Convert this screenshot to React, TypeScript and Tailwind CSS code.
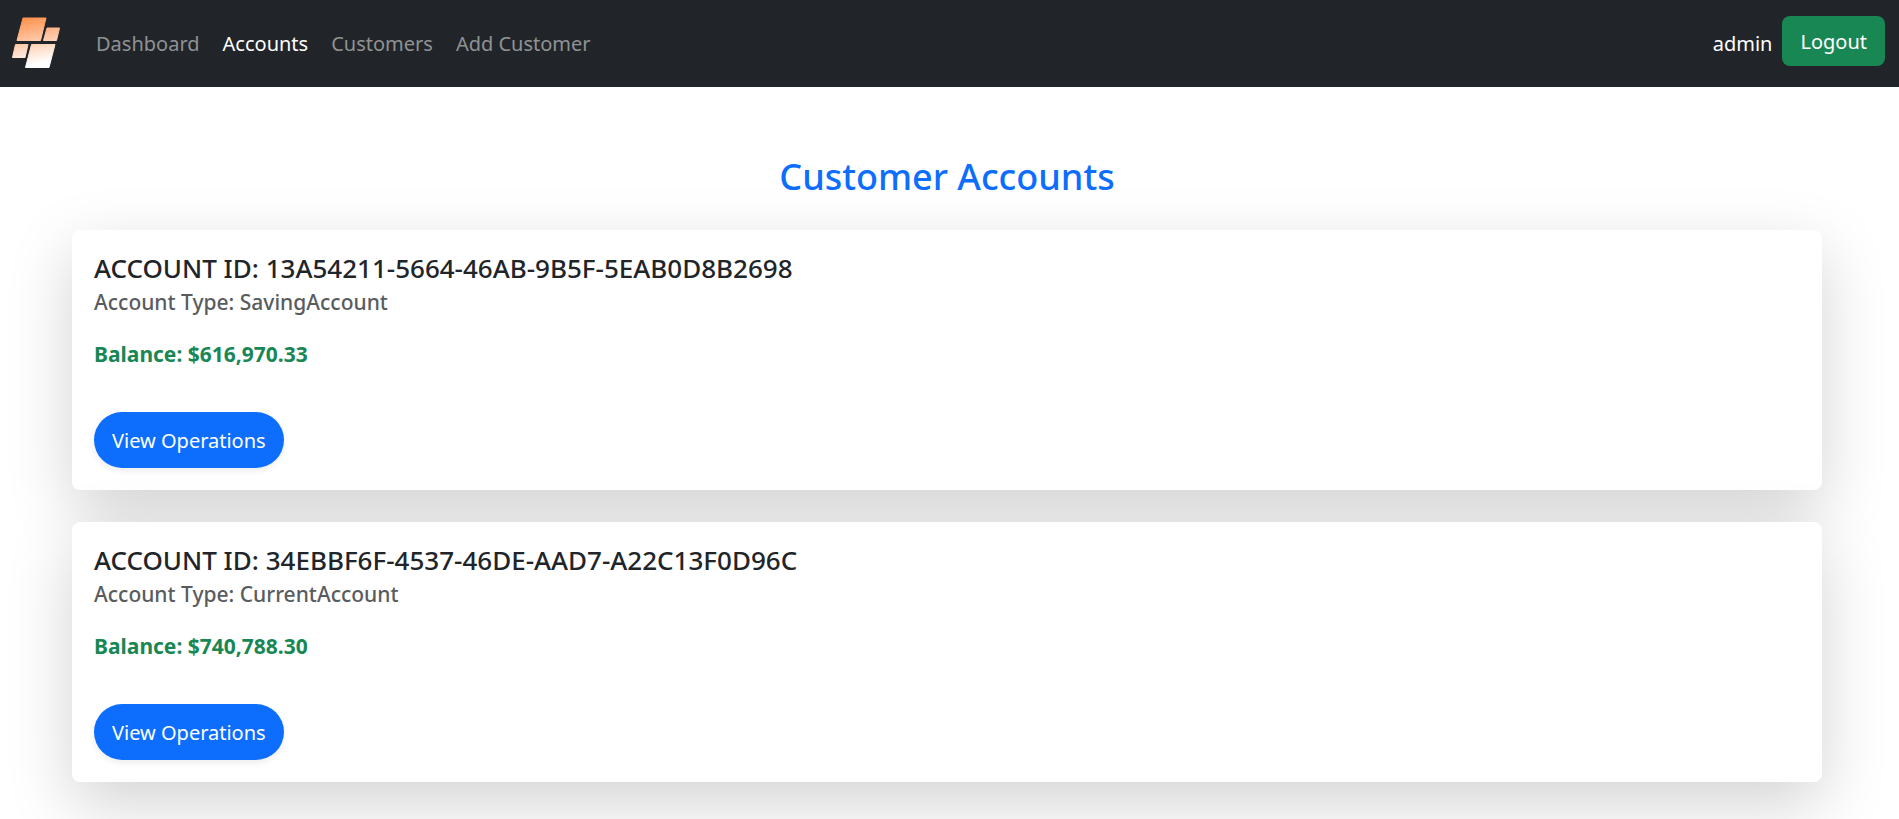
type Account = { id: string; type: string; balance: string };

const accounts: Account[] = [
  { id: '13A54211-5664-46AB-9B5F-5EAB0D8B2698', type: 'SavingAccount', balance: '$616,970.33' },
  { id: '34EBBF6F-4537-46DE-AAD7-A22C13F0D96C', type: 'CurrentAccount', balance: '$740,788.30' },
];

const links = [
  { label: 'Dashboard', active: false },
  { label: 'Accounts', active: true },
  { label: 'Customers', active: false },
  { label: 'Add Customer', active: false },
];

function Logo() {
  return (
    <svg width="52" height="52" viewBox="0 0 52 52" aria-hidden="true">
      <defs>
        <linearGradient id="logo-fill" gradientUnits="userSpaceOnUse" x1="20" y1="0" x2="30" y2="46">
          <stop offset="0" stopColor="#ff914d" />
          <stop offset="1" stopColor="#ffffff" />
        </linearGradient>
      </defs>
      <g fill="url(#logo-fill)" stroke="url(#logo-fill)" strokeWidth="1" strokeLinejoin="round">
        <path d="M13 1H36L30.500 23.500H7Z" />
        <path d="M37 11H49.500L46.500 23.500H33.500Z" />
        <path d="M5.500 27.500H18L15 40.500H2.500Z" />
        <path d="M21.500 27.500H45L39 50.500H15.500Z" />
      </g>
    </svg>
  );
}

function Navbar() {
  return (
    <nav className="flex h-[87px] items-center bg-[#212529] pr-3.5 pl-2.5 text-xl">
      <a href="#home" aria-label="Home" className="mr-[34px] mb-0.5">
        <Logo />
      </a>
      <ul className="flex gap-[23px]">
        {links.map((link) => (
          <li key={link.label}>
            <a
              href={'#' + link.label.toLowerCase().replace(' ', '-')}
              aria-current={link.active ? 'page' : undefined}
              className={link.active ? 'text-white' : 'text-[#909294]'}
            >
              {link.label}
            </a>
          </li>
        ))}
      </ul>
      <span className="mr-2.5 ml-auto text-white">admin</span>
      <button type="button" className="mb-1.5 h-[50px] rounded-lg bg-[#198754] px-[18px] pt-0.5 text-white">
        Logout
      </button>
    </nav>
  );
}

function AccountCard({ account }: { account: Account }) {
  return (
    <article className="rounded-lg bg-white p-[22px] shadow-[0_22px_66px_rgba(0,0,0,0.175)]">
      <h2 className="text-[26px] leading-8 font-medium text-[#212529]">ACCOUNT ID: {account.id}</h2>
      <h3 className="mt-0.5 text-[21px] leading-8 font-medium text-[#595c5f]">Account Type: {account.type}</h3>
      <p className="mt-5 text-[21px] leading-8 font-bold text-[#198754]">Balance: {account.balance}</p>
      <button
        type="button"
        className="mt-[42px] h-14 rounded-full bg-[#0d6efd] px-[18px] pt-0.5 text-xl text-white shadow-[0_3px_6px_rgba(0,0,0,0.075)]"
      >
        View Operations
      </button>
    </article>
  );
}

export default function App() {
  return (
    <div className="min-h-screen overflow-hidden bg-white font-['Noto_Sans',sans-serif]">
      <Navbar />
      <main className="pr-[77px] pb-8 pl-[72px]">
        <h1 className="mt-[66px] text-center text-4xl leading-12 font-medium text-[#0d6efd]">Customer Accounts</h1>
        <div className="mt-[29px] flex flex-col gap-8">
          {accounts.map((account) => (
            <AccountCard key={account.id} account={account} />
          ))}
        </div>
      </main>
    </div>
  );
}
